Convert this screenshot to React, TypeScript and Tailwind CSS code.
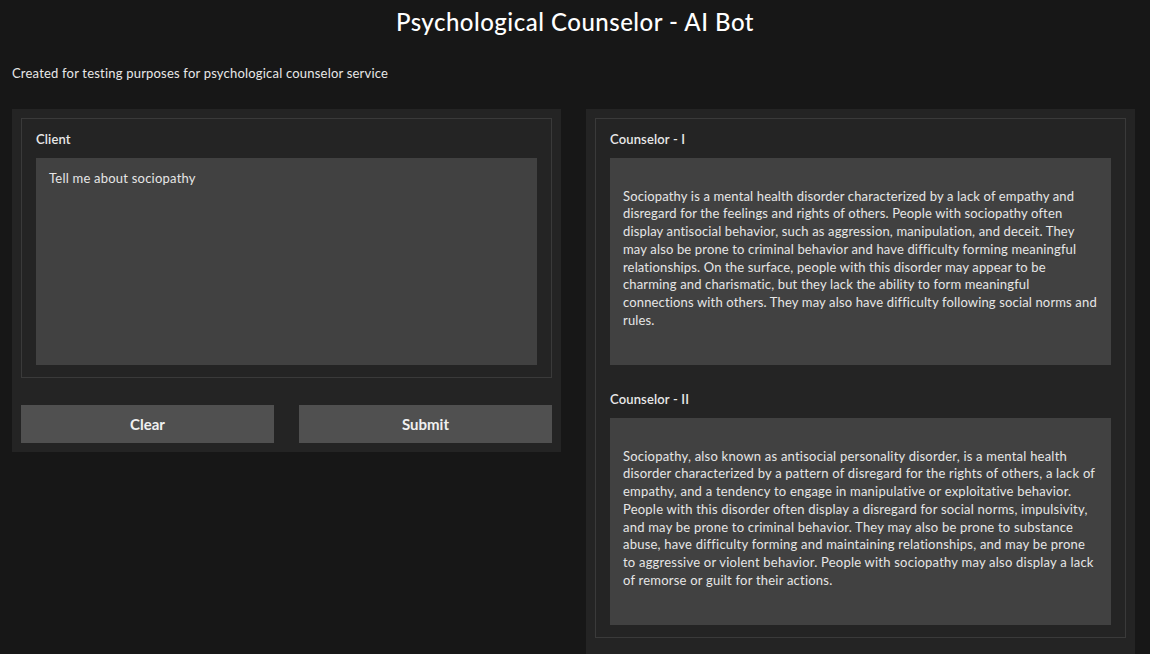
import React from "react";

const answerOne =
  "\nSociopathy is a mental health disorder characterized by a lack of empathy and disregard for the feelings and rights of others. People with sociopathy often display antisocial behavior, such as aggression, manipulation, and deceit. They may also be prone to criminal behavior and have difficulty forming meaningful relationships. On the surface, people with this disorder may appear to be charming and charismatic, but they lack the ability to form meaningful connections with others. They may also have difficulty following social norms and rules.";

const answerTwo =
  "\nSociopathy, also known as antisocial personality disorder, is a mental health disorder characterized by a pattern of disregard for the rights of others, a lack of empathy, and a tendency to engage in manipulative or exploitative behavior. People with this disorder often display a disregard for social norms, impulsivity, and may be prone to criminal behavior. They may also be prone to substance abuse, have difficulty forming and maintaining relationships, and may be prone to aggressive or violent behavior. People with sociopathy may also display a lack of remorse or guilt for their actions.";

function Field({ label, value, tight }: { label: string; value: string; tight?: boolean }) {
  return (
    <div className="flex flex-col">
      <span className="text-[13px] leading-[18px] font-semibold tracking-[0.15px] text-[#e8e8e8]">{label}</span>
      <div
        className={
          "mt-[10px] h-[207px] bg-[#414141] px-[13px] py-[12px] text-[13px] leading-[17.7px] text-[#e6e6e6] whitespace-pre-wrap " +
          (tight ? "tracking-[0.15px]" : "tracking-[0.22px]")
        }
      >
        {value}
      </div>
    </div>
  );
}

export default function App() {
  return (
    <div
      className="min-h-screen bg-[#171717] text-white overflow-hidden"
      style={{ fontFamily: "Lato, 'Noto Sans', sans-serif" }}
    >
      <h1 className="pt-[6px] text-center text-[24px] leading-[32px] font-medium tracking-[0.5px]">
        Psychological Counselor - AI Bot
      </h1>
      <p className="mt-[26px] px-3 text-[13px] leading-[18px] tracking-[0.2px] text-[#e8e8e8]">
        Created for testing purposes for psychological counselor service
      </p>

      <div className="mt-[27px] grid grid-cols-[549px_549px] gap-[25px] px-3 items-start">
        <div className="bg-[#242424] p-[9px]">
          <div className="border border-[#3a3a3a] px-[14px] pt-[11px] pb-[12px]">
            <Field label="Client" value="Tell me about sociopathy" />
          </div>
          <div className="mt-[27px] grid grid-cols-2 gap-[25px]">
            <button className="h-[38px] bg-[#505050] text-[15px] font-bold text-[#f0f0f0]">Clear</button>
            <button className="h-[38px] bg-[#505050] text-[15px] font-bold text-[#f0f0f0]">Submit</button>
          </div>
        </div>

        <div className="bg-[#242424] px-[9px] pt-[9px] pb-[20px]">
          <div className="border border-[#3a3a3a] px-[14px] pt-[11px] pb-[12px] flex flex-col gap-[25px]">
            <Field label="Counselor - I" value={answerOne} tight />
            <Field label="Counselor - II" value={answerTwo} />
          </div>
        </div>
      </div>
    </div>
  );
}
